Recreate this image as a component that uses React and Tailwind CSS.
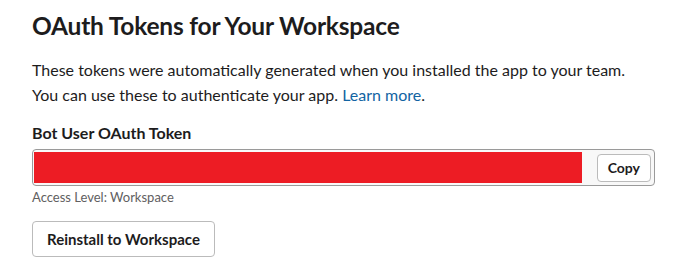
import React from 'react';

export default function App() {
  return (
    <div className="min-h-screen w-full bg-white text-[#1d1c1d]" style={{ fontFamily: 'Lato, "Liberation Sans", sans-serif' }}>
      <div className="pl-[32px] pr-[26px] pt-[10px]">
        <h1 className="text-[24.5px] font-bold leading-[32px] tracking-[-0.2px]">OAuth Tokens for Your Workspace</h1>

        <p className="mt-[15px] text-[16px] leading-[25px]">
          These tokens were automatically generated when you installed the app to your team.
          <br />
          You can use these to authenticate your app. <a href="#" className="text-[#1264a3]">Learn more</a>.
        </p>

        <div className="mt-[15px] text-[16px] font-bold leading-[22px]">Bot User OAuth Token</div>

        <div className="mt-[5px] flex h-[37px] w-[623px] items-center rounded-[4px] border border-[#9a9a9a] bg-[#f8f8f8] pl-[1px] pr-[3px]">
          <div className="h-[31px] w-[548px] bg-[#ed1c24]" />
          <div className="flex-1" />
          <button className="flex h-[28px] items-center rounded-[4px] border border-[#bbbbbb] bg-white px-[10px] text-[14px] font-bold">Copy</button>
        </div>

        <div className="mt-[2px] text-[13px] leading-[18px] text-[#616061]">Access Level: Workspace</div>

        <button className="mt-[15px] flex h-[36px] items-center rounded-[4px] border border-[#bbbbbb] bg-white px-[14px] text-[15px] font-bold">Reinstall to Workspace</button>
      </div>
    </div>
  );
}
